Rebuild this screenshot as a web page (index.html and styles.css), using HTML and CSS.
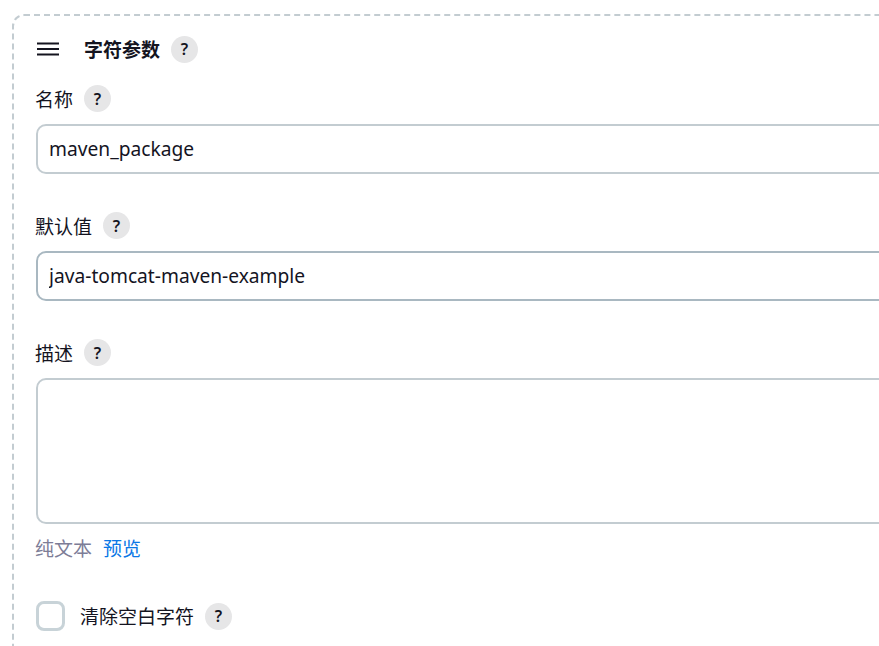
FILE: index.html
```html
<!DOCTYPE html>
<html lang="zh-CN">
<head>
    <meta charset="UTF-8">
    <title>字符参数</title>
    <link rel="stylesheet" href="styles.css">
</head>
<body>

    <div class="repeated-chunk">

        <!-- Header -->
        <div class="chunk-head">
            <svg class="drag-handle" width="22" height="14" viewBox="0 0 22 14" aria-hidden="true">
                <path d="M0 1.5H22M0 7H22M0 12.5H22" stroke="#14141f" stroke-width="2"/>
            </svg>
            <span class="chunk-title">字符参数</span>
            <span class="help">?</span>
        </div>

        <!-- Name -->
        <div class="field">
            <div class="field-label">名称 <span class="help">?</span></div>
            <input class="text-box" type="text" value="maven_package">
        </div>

        <!-- Default value -->
        <div class="field">
            <div class="field-label">默认值 <span class="help">?</span></div>
            <input class="text-box text-box-hover" type="text" value="java-tomcat-maven-example">
        </div>

        <!-- Description -->
        <div class="field">
            <div class="field-label">描述 <span class="help">?</span></div>
            <textarea class="text-box text-area"></textarea>
            <div class="format-row">
                <span class="format-name">纯文本</span>
                <a class="preview-link" href="#">预览</a>
            </div>
        </div>

        <!-- Trim -->
        <div class="check-row">
            <span class="check-box"></span>
            <span class="check-label">清除空白字符</span>
            <span class="help">?</span>
        </div>

    </div>

</body>
</html>
```

FILE: styles.css
```css
/* General Styles */
* {
    margin: 0;
    padding: 0;
    box-sizing: border-box;
    font-family: "Noto Sans", "Noto Sans CJK SC", sans-serif;
}
html, body {
    height: 100%;
    overflow: hidden;
}
body {
    background: #ffffff;
    color: #14141f;
    padding: 14px 0 0 12px;
}

/* Dashed card */
.repeated-chunk {
    width: 1100px;
    height: 800px;
    border: 2px dashed #c3ccd1;
    border-radius: 12px;
    padding: 15px 22px;
}

/* Header */
.chunk-head {
    display: flex;
    align-items: center;
    height: 36px;
    margin-bottom: 18px;
}
.drag-handle {
    margin-left: 1px;
    margin-right: 25px;
}
.chunk-title {
    font-size: 19px;
    font-weight: 700;
    margin-right: 11px;
}

/* Help button */
.help {
    display: inline-flex;
    align-items: center;
    justify-content: center;
    width: 27px;
    height: 27px;
    border-radius: 50%;
    background: #e6e6e7;
    font-size: 16px;
    font-weight: 600;
    line-height: 1;
}

/* Fields */
.field {
    margin-bottom: 38px;
}
.field-label {
    display: flex;
    align-items: center;
    gap: 11px;
    height: 27px;
    margin-left: -1px;
    font-size: 19px;
    margin-bottom: 12px;
}
.text-box {
    display: block;
    width: 100%;
    height: 50px;
    padding: 0 11px 1px;
    border: 2px solid #c3ccd1;
    border-radius: 10px;
    background: #ffffff;
    color: #14141f;
    font-size: 19.2px;
    outline: none;
}
.text-box-hover {
    border-color: #a9b8c1;
}
.text-area {
    height: 146px;
    resize: none;
}

/* Format line under the textarea */
.format-row {
    display: flex;
    gap: 11px;
    margin-top: 11px;
    margin-left: -1px;
    font-size: 19px;
    line-height: 28px;
}
.format-name {
    color: #7d7d97;
}
.preview-link {
    color: #0b78e6;
    text-decoration: none;
}

/* Checkbox */
.check-row {
    display: flex;
    align-items: center;
    margin-top: 18px;
}
.check-box {
    width: 29px;
    height: 30px;
    border: 3px solid #c8d3d8;
    border-radius: 8px;
    margin-right: 15px;
}
.check-label {
    font-size: 19px;
    margin-right: 11px;
}
```
